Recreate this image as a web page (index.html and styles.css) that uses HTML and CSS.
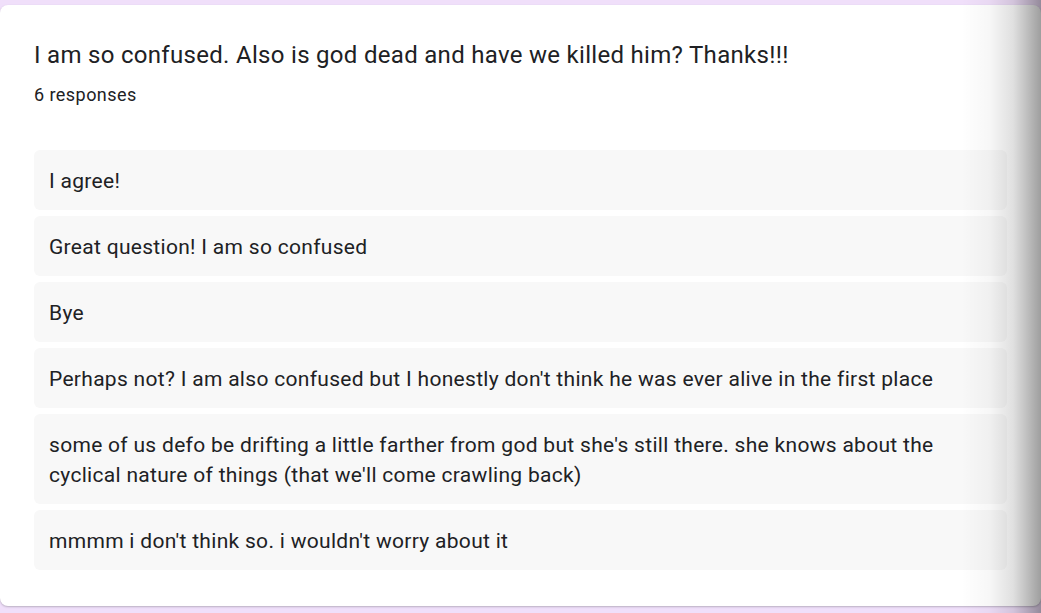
FILE: index.html
```html
<!DOCTYPE html>
<html>
<head>
<meta charset="utf-8">
<link rel="stylesheet" href="styles.css">
</head>
<body>
<div class="card">
  <div class="title">I am so confused. Also is god dead and have we killed him? Thanks!!!</div>
  <div class="count">6 responses</div>
  <div class="list">
    <div class="item">I agree!</div>
    <div class="item">Great question! I am so confused</div>
    <div class="item">Bye</div>
    <div class="item">Perhaps not? I am also confused but I honestly don't think he was ever alive in the first place</div>
    <div class="item">some of us defo be drifting a little farther from god but she's still there. she knows about the cyclical nature of things (that we'll come crawling back)</div>
    <div class="item">mmmm i don't think so. i wouldn't worry about it</div>
  </div>
</div>
<div class="fade"></div>
</body>
</html>
```
FILE: styles.css
```css
html, body {
  margin: 0;
  padding: 0;
  height: 100%;
}
body {
  background: #f0dffa;
  font-family: Roboto, "Liberation Sans", sans-serif;
  color: #202124;
  overflow: hidden;
}
.card {
  margin: 5px 0 0 0;
  height: 601px;
  box-sizing: border-box;
  background: #fff;
  border-radius: 8px;
  box-shadow: 0 1px 2px rgba(60, 64, 67, 0.3);
  padding: 32px 34px 36px 34px;
}
.title {
  font-size: 24px;
  line-height: 36px;
  letter-spacing: 0.3px;
}
.count {
  font-size: 18px;
  line-height: 24px;
  margin-top: 10px;
  letter-spacing: 0.45px;
}
.list {
  margin-top: 43px;
  display: flex;
  flex-direction: column;
  gap: 6px;
}
.item {
  background: #f8f8f8;
  border-radius: 6px;
  padding: 16px 15px 14px 15px;
  font-size: 21px;
  line-height: 30px;
  letter-spacing: 0.3px;
}
.fade {
  position: absolute;
  top: 0;
  right: 0;
  width: 80px;
  height: 100%;
  background: linear-gradient(to right, rgba(0,0,0,0) 0%, rgba(0,0,0,0.03) 35%, rgba(0,0,0,0.12) 65%, rgba(0,0,0,0.38) 100%);
  pointer-events: none;
}
```
